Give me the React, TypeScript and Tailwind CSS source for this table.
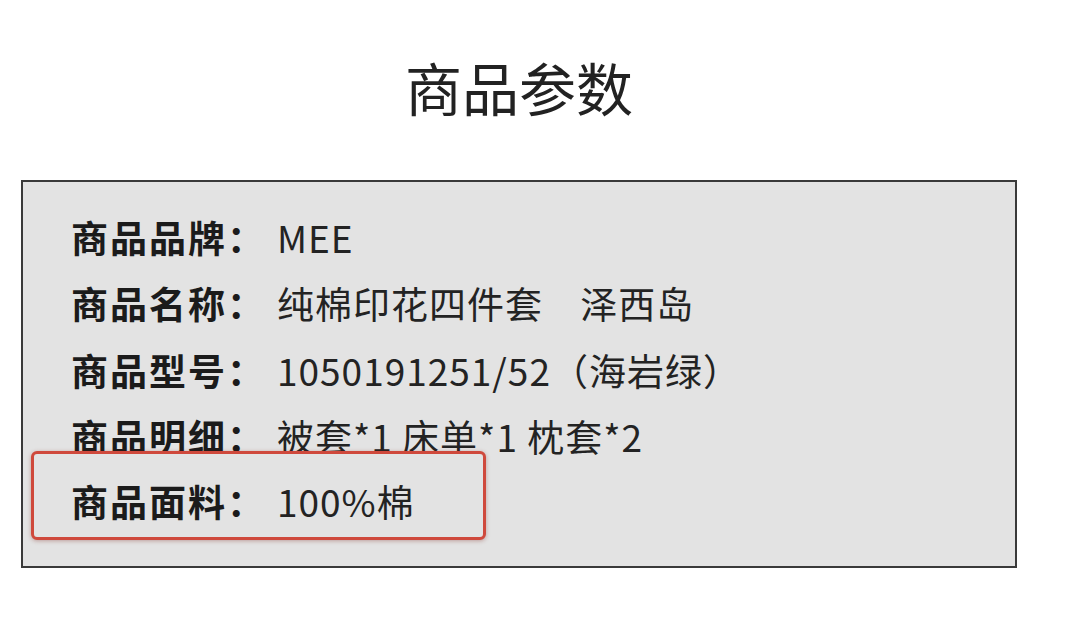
const rows = [
  { label: "商品品牌：", value: "MEE" },
  { label: "商品名称：", value: "纯棉印花四件套    泽西岛" },
  { label: "商品型号：", value: "1050191251/52（海岩绿）" },
  { label: "商品明细：", value: "被套*1 床单*1 枕套*2" },
];

function Row({ label, value }: { label: string; value: string }) {
  return (
    <div className="flex items-center h-[66.5px] whitespace-pre">
      <span className="w-[206px] shrink-0 font-bold text-[37px] tracking-[2px] text-[#1b1b1b]">{label}</span>
      <span className="text-[37px] tracking-[1px] text-[#232323]">{value}</span>
    </div>
  );
}

export default function App() {
  return (
    <div
      className="w-[1080px] h-[623px] bg-white overflow-hidden"
      style={{ fontFamily: '"Noto Sans CJK SC", "Noto Sans", sans-serif' }}
    >
      <div className="w-[1038px] pt-[58px] flex justify-center">
        <h1 className="text-[57px] leading-[57px] text-[#222]">商品参数</h1>
      </div>

      <div className="ml-[21px] mt-[65px] w-[996px] h-[388px] border-2 border-[#3a3a3a] bg-[#e3e3e3] pt-[22px] pl-[48px]">
        {rows.map((r) => (
          <Row key={r.label} label={r.label} value={r.value} />
        ))}
        {/* highlighted row */}
        <div className="relative">
          <div className="absolute -left-[40px] -top-[19px] w-[455px] h-[89px] rounded-[6px] border-[3px] border-[#cf493c] bg-[#e3e3e3] shadow-[0_1px_4px_rgba(120,30,20,0.35)]" />
          <div className="relative -top-[2px]">
            <Row label="商品面料：" value="100%棉" />
          </div>
        </div>
      </div>
    </div>
  );
}
